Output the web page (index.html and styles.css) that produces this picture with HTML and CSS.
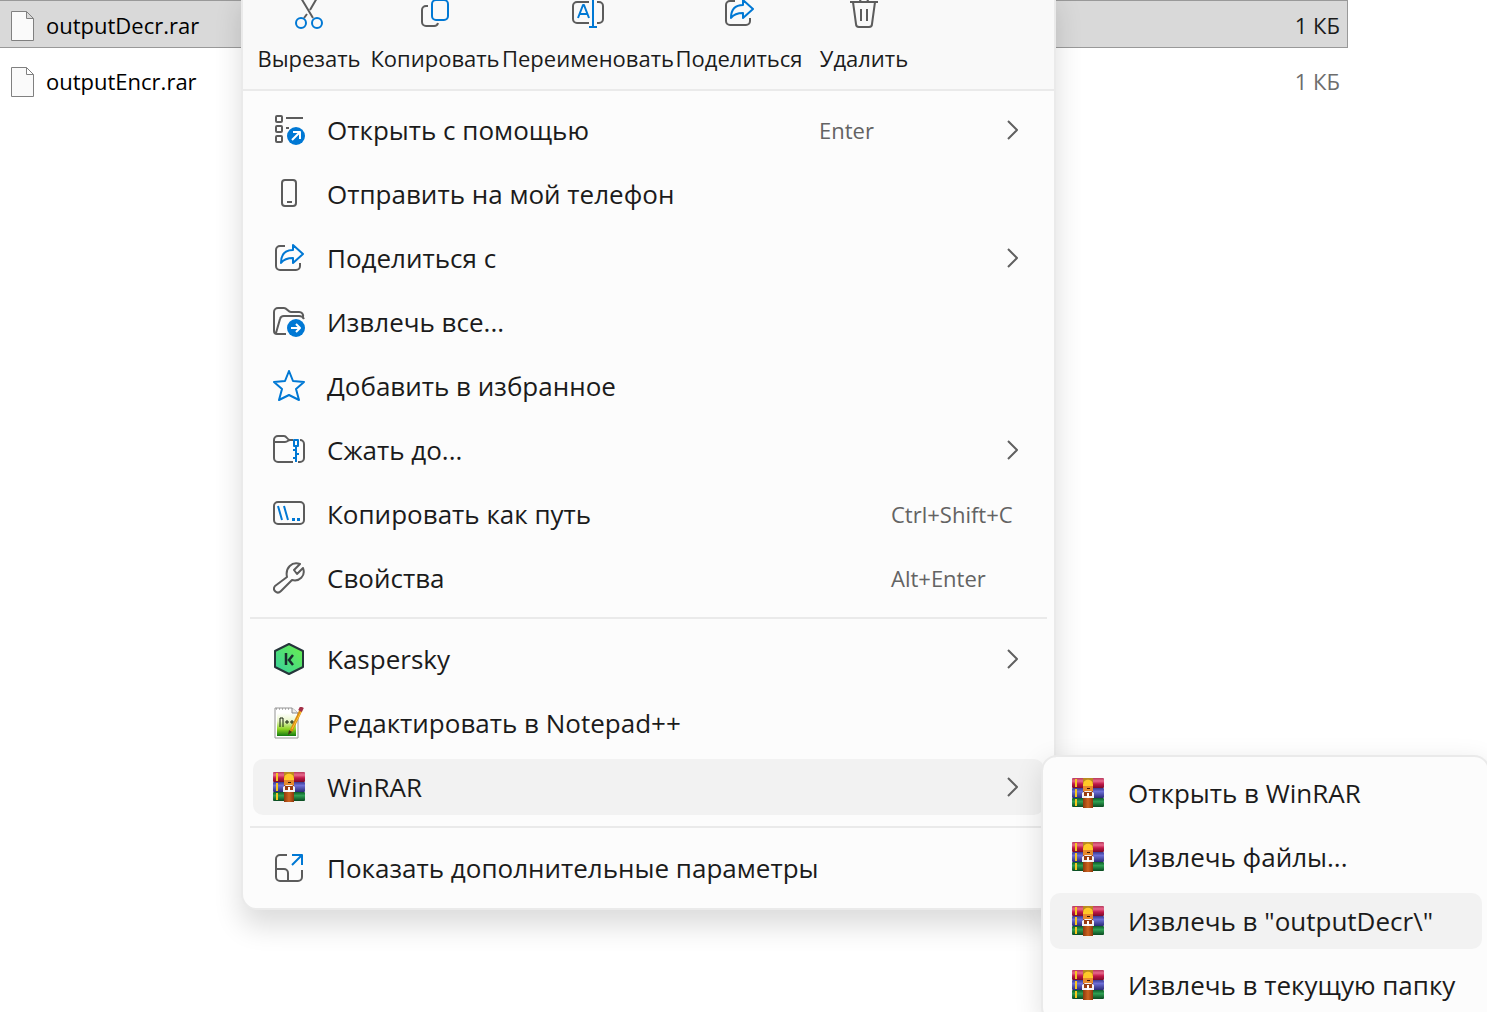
FILE: index.html
```html
<!DOCTYPE html>
<html lang="ru">
<head>
<meta charset="utf-8">
<title>Проводник</title>
<link rel="stylesheet" href="styles.css">
</head>
<body>
<svg class="sprite" aria-hidden="true">
  <defs>
    <linearGradient id="book-red" x1="0" y1="0" x2="0" y2="1"><stop offset="0" stop-color="#b83a5c"/><stop offset=".3" stop-color="#e8688c"/><stop offset=".6" stop-color="#c01848"/><stop offset="1" stop-color="#7a0a28"/></linearGradient>
    <linearGradient id="book-blue" x1="0" y1="0" x2="0" y2="1"><stop offset="0" stop-color="#3a3a92"/><stop offset=".35" stop-color="#6d6fd6"/><stop offset="1" stop-color="#2b2a78"/></linearGradient>
    <linearGradient id="book-green" x1="0" y1="0" x2="0" y2="1"><stop offset="0" stop-color="#0d5a28"/><stop offset=".4" stop-color="#2fa052"/><stop offset="1" stop-color="#0a4a20"/></linearGradient>
    <linearGradient id="belt" x1="0" y1="0" x2="1" y2="0"><stop offset="0" stop-color="#8c3a0e"/><stop offset=".5" stop-color="#cf6420"/><stop offset="1" stop-color="#8a360c"/></linearGradient>
    <linearGradient id="hex" x1="1" y1="0" x2="0" y2="1"><stop offset="0" stop-color="#6cf04a"/><stop offset="1" stop-color="#35cfa0"/></linearGradient>
    <linearGradient id="note" x1="0" y1="0" x2="0" y2="1"><stop offset="0" stop-color="#ffffff"/><stop offset=".35" stop-color="#e9f6c8"/><stop offset=".7" stop-color="#8ed321"/><stop offset="1" stop-color="#117a12"/></linearGradient>
  </defs>
  <symbol id="winrar" viewBox="0 0 32 32">
    <rect x="0" y="1" width="32" height="10" rx="1" fill="url(#book-red)"/>
    <rect x="0" y="11" width="32" height="10" rx="1" fill="url(#book-blue)"/>
    <rect x="0" y="21" width="32" height="9" rx="1" fill="url(#book-green)"/>
    <path d="M4 2v8M4 12v8M4 22v7" stroke="#f7c81e" stroke-width="2"/>
    <path d="M11 1h10v30H11z" fill="url(#belt)"/>
    <path d="M11 1h10v5H11z" fill="#b98a20"/>
    <path d="M11 8c0-7 10-7 10 0v1H11z" fill="#ffc928"/>
    <path d="M11 9h10v5H11z" fill="#e8892b"/>
    <path d="M15 11h3v1h-3z" fill="#3a1406"/>
    <path d="M10 16l3-2h6l3 2v5H10z" fill="#f4f1f4"/>
    <path d="M12 15h8v4h-8z" fill="#9a3c10"/>
    <path d="M15 16h2v5h-2z" fill="#fff"/>
  </symbol>
  <symbol id="share" viewBox="0 0 32 32">
    <path class="g" d="M12 4H7a4 4 0 0 0-4 4v16a4 4 0 0 0 4 4h16a4 4 0 0 0 4-4v-3"/>
    <path class="b" d="M20 3l10 9-10 9v-5c-6 0-9 1-12 5 0-8 4-13 12-13z"/>
  </symbol>
  <symbol id="chevron" viewBox="0 0 12 20"><path class="thin" d="M1 1l9 9-9 9"/></symbol>
  <symbol id="page" viewBox="0 0 24 30"><path d="M1.500.500h15l7 7v22h-22zM16.500.500v7h7" fill="#fafafa" stroke="#808080"/></symbol>
</svg>

<main class="desktop">
  <table class="files">
    <tbody>
      <tr class="selected"><td><span class="file"><svg width="24" height="30"><use href="#page"/></svg>outputDecr.rar</span></td><td class="size">1 КБ</td></tr>
      <tr><td><span class="file"><svg width="24" height="30"><use href="#page"/></svg>outputEncr.rar</span></td><td class="size">1 КБ</td></tr>
    </tbody>
  </table>

  <div class="menu context">
    <div class="actions">
      <button class="action"><svg class="icon" viewBox="0 0 32 32"><path class="g" d="M8 1l12 20M24 1l-7 12M14 17l-3 4"/><circle class="b" cx="8" cy="26" r="5"/><circle class="b" cx="24" cy="26" r="5"/></svg>Вырезать</button>
      <button class="action"><svg class="icon" viewBox="0 0 32 32"><path class="g" d="M9 9H7a4 4 0 0 0-4 4v12a4 4 0 0 0 4 4h8a4 4 0 0 0 4-3"/><rect class="b" x="13" y="3" width="16" height="20" rx="4"/></svg>Копировать</button>
      <button class="action"><svg class="icon" viewBox="0 0 32 32"><path class="g" d="M17 5H5a4 4 0 0 0-4 4v13a4 4 0 0 0 4 4h12M25 5h2a4 4 0 0 1 4 4v13a4 4 0 0 1-4 4h-2"/><path class="b" d="M6 21l5-13h1l5 13M8 17h7M21 2v28M17 2h8M17 30h8"/></svg>Переименовать</button>
      <button class="action"><svg class="icon" viewBox="0 0 32 32"><use href="#share"/></svg>Поделиться</button>
      <button class="action"><svg class="icon" viewBox="0 0 32 32"><path class="g" d="M2 5h28M12 5c0-5 8-5 8 0M5 5l3 22a3 3 0 0 0 3 3h10a3 3 0 0 0 3-3l3-22M13 12v12M19 12v12"/></svg>Удалить</button>
    </div>
    <div class="items">
      <button class="item"><svg class="icon" viewBox="0 0 32 32"><g class="g"><rect x="3" y="2" width="6" height="6" rx="1"/><rect x="3" y="12" width="6" height="6" rx="1"/><rect x="3" y="22" width="6" height="6" rx="1"/><path d="M13 4h17M13 14h3"/></g><circle cx="23" cy="22" r="9" fill="#0078d4"/><path d="M19 26l7-7M20 18h7v7" class="w"/></svg><span class="label">Открыть с помощью</span><span class="keys short">Enter</span><svg class="chevron"><use href="#chevron"/></svg></button>
      <button class="item"><svg class="icon" viewBox="0 0 32 32"><rect class="g" x="9" y="2" width="14" height="26" rx="3"/><path class="g" d="M14 24h5"/></svg><span class="label">Отправить на мой телефон</span></button>
      <button class="item"><svg class="icon" viewBox="0 0 32 32"><use href="#share"/></svg><span class="label">Поделиться с</span><svg class="chevron"><use href="#chevron"/></svg></button>
      <button class="item"><svg class="icon" viewBox="0 0 32 32"><path class="g" d="M13 28H4a3 3 0 0 1-3-3V6a4 4 0 0 1 4-4h6c3 0 4 4 7 4h8a4 4 0 0 1 4 5M3 27l4-14a4 4 0 0 1 4-3h15c2 0 4 1 5 3"/><circle cx="23" cy="22" r="9" fill="#0078d4"/><path class="w" d="M18 22h9M23 18l4 4-4 4"/></svg><span class="label">Извлечь все...</span></button>
      <button class="item"><svg class="icon" viewBox="0 0 32 32"><path class="b" d="M16 1l4 10 11 1-8 7 3 11-10-5-10 5 3-11-8-7 11-1z"/></svg><span class="label">Добавить в избранное</span></button>
      <button class="item"><svg class="icon" viewBox="0 0 32 32"><path class="g" d="M20 28H5a4 4 0 0 1-4-4V6a4 4 0 0 1 4-4h6c3 0 3 4 6 4h3M1 8h11c3 0 3-2 5-2M27 6a4 4 0 0 1 4 4v14a4 4 0 0 1-4 4h-2"/><path class="b" d="M21 6h4v6h-4zM23 12v16M23 16h-3M23 20h3M23 24h-3"/></svg><span class="label">Сжать до...</span><svg class="chevron"><use href="#chevron"/></svg></button>
      <button class="item"><svg class="icon" viewBox="0 0 32 32"><rect class="g" x="1" y="4" width="30" height="22" rx="4"/><path class="b" d="M5 8l4 14M11 8l4 14"/><path d="M19 20h3v3h-3zM24 20h3v3h-3z" fill="#0078d4"/></svg><span class="label">Копировать как путь</span><span class="keys">Ctrl+Shift+C</span></button>
      <button class="item"><svg class="icon" viewBox="0 0 32 32"><path class="g" d="M14 15C12 6 19-1 27 2l-6 6 3 4 6-6c3 8-4 14-11 12L8 29c-4 4-9-1-6-5z"/></svg><span class="label">Свойства</span><span class="keys">Alt+Enter</span></button>
      <hr>
      <button class="item"><svg class="icon" viewBox="0 0 32 32"><path d="M16 1l14 7v16l-14 7-14-7V8z" fill="url(#hex)" stroke="#25343a" stroke-width="2" stroke-linejoin="round"/><path d="M13 10v12M20 12l-4 5 4 5" fill="none" stroke="#182c2c" stroke-width="2.500"/></svg><span class="label">Kaspersky</span><svg class="chevron"><use href="#chevron"/></svg></button>
      <button class="item"><svg class="icon" viewBox="0 0 32 32"><path d="M2 1h17l6 5v25H2z" fill="#fff" stroke="#949494"/><path d="M4 6h19v23H4z" fill="url(#note)"/><path d="M3 2h15" stroke="#777" stroke-dasharray="1 2"/><path d="M19 1v5h6" fill="#eee" stroke="#888"/><path d="M7 20v-9h3v9M12 15h4M14 13v4M17 15h4M19 13v4" fill="none" stroke="#15200c"/><path d="M28 3L18 24" stroke="#d98b12" stroke-width="3"/><path d="M29 3L19 22" stroke="#ffc534" stroke-width="1"/><path d="M29 0l-2 4" stroke="#a33048" stroke-width="4"/><path d="M16 23l3 2-4 3z" fill="#493118"/></svg><span class="label">Редактировать в Notepad++</span></button>
      <button class="item active"><svg class="icon"><use href="#winrar"/></svg><span class="label">WinRAR</span><svg class="chevron"><use href="#chevron"/></svg></button>
      <hr>
      <button class="item"><svg class="icon" viewBox="0 0 32 32"><path class="g" d="M14 3H7a4 4 0 0 0-4 4v18a4 4 0 0 0 4 4h18a4 4 0 0 0 4-4v-7M3 17h8a4 4 0 0 1 4 4v8"/><path class="b" d="M19 13L29 3M19 3h10v10"/></svg><span class="label">Показать дополнительные параметры</span></button>
    </div>
  </div>

  <div class="menu submenu">
    <button class="item"><svg class="icon"><use href="#winrar"/></svg><span class="label">Открыть в WinRAR</span></button>
    <button class="item"><svg class="icon"><use href="#winrar"/></svg><span class="label">Извлечь файлы...</span></button>
    <button class="item active"><svg class="icon"><use href="#winrar"/></svg><span class="label">Извлечь в "outputDecr\"</span></button>
    <button class="item"><svg class="icon"><use href="#winrar"/></svg><span class="label">Извлечь в текущую папку</span></button>
  </div>
</main>
</body>
</html>
```
FILE: styles.css
```css
* { box-sizing: border-box; }

body {
  margin: 0;
  background: #fff;
  color: #1b1b1b;
  font-family: "Open Sans", "Noto Sans", sans-serif;
}

.sprite { position: absolute; width: 0; height: 0; }

.desktop {
  position: relative;
  height: 100vh;
  overflow: hidden;
}

/* File list */
.files {
  width: calc(100% - 139px);
  margin-top: -8px;
  border-collapse: separate;
  border-spacing: 0 8px;
  font-size: 22px;
  line-height: 43px;
  color: #000;
}
.files td { height: 48px; padding: 3px 0 0; border: 1px solid transparent; border-width: 1px 0; }
.files .size { padding-right: 7px; border-right-width: 1px; text-align: right; color: #6d6d6d; }
.files .selected td { background: #d9d9d9; border-color: #999; }
.files .selected .size { color: #1b1b1b; }
.file { display: flex; align-items: center; gap: 12px; padding-left: 10px; }

/* Menus */
.menu {
  position: absolute;
  background: #fcfcfc;
  background-clip: padding-box;
  border: 2px solid #eaeaea;
  border-radius: 16px;
}
.context {
  top: -16px;
  left: 241px;
  width: 815px;
  box-shadow: 0 16px 28px rgba(0, 0, 0, .14);
}
.submenu {
  top: 755px;
  left: 1041px;
  width: 449px;
  padding: 4px 6px 4px 7px;
  box-shadow: 0 8px 28px rgba(0, 0, 0, .12);
}

button {
  border: 0;
  background: none;
  color: inherit;
  font-family: inherit;
  white-space: nowrap;
}

.actions {
  display: grid;
  grid-template-columns: 122px 130px 176px 126px 124px;
  padding: 11px 5px 15px;
  background: #f9f9f9;
  border-bottom: 2px solid #eaeaea;
  border-radius: 14px 14px 0 0;
}
.action {
  display: flex;
  flex-direction: column;
  align-items: center;
  gap: 13px;
  padding: 0;
  font-size: 22px;
  line-height: 32px;
}

.items { padding: 7px 0 8px; }
.item {
  display: flex;
  align-items: center;
  gap: 22px;
  width: calc(100% - 20px);
  height: 56px;
  margin: 4px 10px;
  padding: 0 20px;
  border-radius: 10px;
  font-size: 26px;
  line-height: 36px;
  text-align: left;
}
.submenu .item { width: 100%; margin: 4px 0; padding: 0 22px; gap: 24px; }
.submenu .item + .item, .item + .item { margin-top: 8px; }
.active { background: #f2f2f2; }
.label { flex: 1; }
.keys { width: 133px; font-size: 22px; color: #636363; }
.keys.short { width: 166px; }

hr {
  height: 2px;
  margin: 11px 7px 12px;
  border: 0;
  background: #eaeaea;
}

/* Icons */
.icon { flex: none; width: 32px; height: 32px; }
.chevron { flex: none; width: 12px; height: 20px; margin-right: 5px; }
.g, .b, .w, .thin { fill: none; stroke-width: 2; stroke-linejoin: round; }
.g { stroke: #5c5c5c; }
.b { stroke: #0078d4; }
.w { stroke: #fff; }
.thin { stroke: #606060; }
```
